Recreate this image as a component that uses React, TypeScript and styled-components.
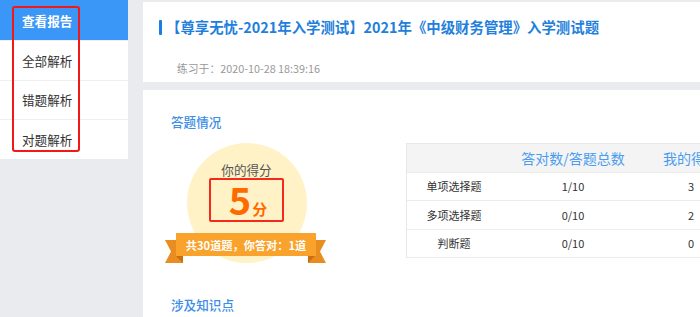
import React from "react";
import styled, { createGlobalStyle } from "styled-components";

const Global = createGlobalStyle`
  html, body {
    margin: 0;
    padding: 0;
    overflow: hidden;
    background: #e9ebee;
    font-family: "Noto Sans CJK SC", "Microsoft YaHei", sans-serif;
  }
`;

const Page = styled.div`
  display: flex;
  align-items: flex-start;
  gap: 15px;
  width: 700px;
  height: 317px;
  overflow: hidden;
`;

const Sidebar = styled.nav`
  position: relative;
  width: 128px;
  flex: none;
  background: #fff;
  display: flex;
  flex-direction: column;
`;

const NavItem = styled.div<{ $active?: boolean }>`
  box-sizing: border-box;
  height: ${(p) => (p.$active ? "40px" : "39.5px")};
  display: flex;
  align-items: center;
  padding-left: 22px;
  font-size: 12.6px;
  color: ${(p) => (p.$active ? "#fff" : "#333")};
  font-weight: ${(p) => (p.$active ? 700 : 400)};
  background: ${(p) => (p.$active ? "#3b97f7" : "#fff")};
  border-top: ${(p) => (p.$active ? "none" : "1px solid #eeeeee")};
`;

const Highlight = styled.div`
  position: absolute;
  left: 12px;
  top: 6px;
  width: 68px;
  height: 146px;
  box-sizing: border-box;
  border: 2px solid #f31818;
  border-radius: 3px;
  pointer-events: none;
`;

const Main = styled.main`
  flex: 1;
  min-width: 0;
  display: flex;
  flex-direction: column;
  gap: 8px;
  padding-top: 2px;
  height: 315px;
`;

const HeaderCard = styled.section`
  background: #fff;
  box-sizing: border-box;
  height: 80px;
  flex: none;
  padding: 15px 0 0 16px;
  overflow: hidden;
`;

const TitleRow = styled.div`
  display: flex;
  align-items: center;
  gap: 4px;
  height: 20px;
`;

const Marker = styled.span`
  width: 3px;
  height: 15px;
  background: #1a7ee0;
  border-radius: 1px;
`;

const Title = styled.h1`
  margin: 0;
  font-size: 14.4px;
  line-height: 20px;
  font-weight: 700;
  color: #1f80dc;
  white-space: nowrap;
`;

const DateLine = styled.div`
  margin: 23px 0 0 18px;
  font-size: 10.8px;
  line-height: 16px;
  color: #999;
`;

const BodyCard = styled.section`
  background: #fff;
  flex: 1;
  min-height: 0;
  overflow: hidden;
  padding: 23px 0 0 28px;
`;

const SectionTitle = styled.h2<{ $gap?: number }>`
  margin: ${(p) => p.$gap ?? 0}px 0 0 0;
  font-size: 12.6px;
  line-height: 18px;
  font-weight: 500;
  color: #3b8de6;
`;

const SummaryRow = styled.div`
  display: flex;
  align-items: flex-start;
  gap: 80px;
  margin: 12px 0 0 -6px;
`;

const ScoreBlock = styled.div`
  width: 161px;
  flex: none;
  display: flex;
  flex-direction: column;
  align-items: center;
`;

const Circle = styled.div`
  width: 120px;
  height: 120px;
  border-radius: 50%;
  background: #fff2c6;
  box-sizing: border-box;
  padding-top: 19px;
  display: flex;
  flex-direction: column;
  align-items: center;
  margin-left: 2px;
`;

const ScoreLabel = styled.div`
  font-size: 12.6px;
  line-height: 16px;
  color: #555;
`;

const ScoreBox = styled.div`
  box-sizing: border-box;
  width: 75px;
  height: 44px;
  border: 2px solid #f52a1a;
  border-radius: 2px;
  display: flex;
  align-items: baseline;
  justify-content: center;
  padding-left: 3px;
  line-height: 38px;
  color: #ff6a00;
  font-weight: 700;
`;

const ScoreNum = styled.span`
  font-size: 38px;
`;

const ScoreUnit = styled.span`
  font-size: 15px;
  margin-left: 1px;
`;

const Ribbon = styled.div`
  position: relative;
  width: 161px;
  height: 30px;
  margin-top: -30px;
`;

const RibbonShape = styled.svg`
  position: absolute;
  inset: 0;
`;

const RibbonText = styled.div`
  position: relative;
  margin-left: 11px;
  width: 140px;
  height: 23px;
  display: flex;
  align-items: center;
  justify-content: center;
  color: #fff;
  font-size: 11.2px;
  font-weight: 700;
  white-space: nowrap;
`;

const Table = styled.div`
  display: grid;
  flex: none;
  grid-template-columns: 94px 144px 92px 200px;
  border-left: 1px solid #e8e8e8;
  border-top: 1px solid #e8e8e8;
`;

const Cell = styled.div<{ $head?: boolean }>`
  box-sizing: border-box;
  height: 28.5px;
  display: flex;
  align-items: center;
  justify-content: center;
  border-bottom: 1px solid #ececec;
  background: ${(p) => (p.$head ? "#f4f4f4" : "#fff")};
  color: ${(p) => (p.$head ? "#4a9cf0" : "#333")};
  font-size: ${(p) => (p.$head ? "14px" : "11px")};
  white-space: nowrap;
`;

const rows = [
  ["单项选择题", "1/10", "3", ""],
  ["多项选择题", "0/10", "2", ""],
  ["判断题", "0/10", "0", ""],
];

export default function App() {
  return (
    <>
      <Global />
      <Page>
        <Sidebar>
          <NavItem $active>查看报告</NavItem>
          <NavItem>全部解析</NavItem>
          <NavItem>错题解析</NavItem>
          <NavItem>对题解析</NavItem>
          <Highlight />
        </Sidebar>
        <Main>
          <HeaderCard>
            <TitleRow>
              <Marker />
              <Title>【尊享无忧-2021年入学测试】2021年《中级财务管理》入学测试题</Title>
            </TitleRow>
            <DateLine>练习于：2020-10-28 18:39:16</DateLine>
          </HeaderCard>
          <BodyCard>
            <SectionTitle>答题情况</SectionTitle>
            <SummaryRow>
              <ScoreBlock>
                <Circle>
                  <ScoreLabel>你的得分</ScoreLabel>
                  <ScoreBox>
                    <ScoreNum>5</ScoreNum>
                    <ScoreUnit>分</ScoreUnit>
                  </ScoreBox>
                </Circle>
                <Ribbon>
                  <RibbonShape width="161" height="30" viewBox="0 0 161 30">
                    <polygon points="0,7 18,7 18,30 0,30 6,18.5" fill="#ea8d20" />
                    <polygon points="143,7 161,7 155,18.5 161,30 143,30" fill="#ea8d20" />
                    <polygon points="11,23 18,23 18,30" fill="#c96f12" />
                    <polygon points="150,23 143,23 143,30" fill="#c96f12" />
                    <rect x="11" y="0" width="140" height="23" fill="#f9a22c" />
                  </RibbonShape>
                  <RibbonText>共30道题，你答对：1道</RibbonText>
                </Ribbon>
              </ScoreBlock>
              <Table>
                <Cell $head />
                <Cell $head>答对数/答题总数</Cell>
                <Cell $head>我的得分</Cell>
                <Cell $head />
                {rows.map((r) =>
                  r.map((c, i) => <Cell key={r[0] + i}>{c}</Cell>)
                )}
              </Table>
            </SummaryRow>
            <SectionTitle $gap={33}>涉及知识点</SectionTitle>
          </BodyCard>
        </Main>
      </Page>
    </>
  );
}
